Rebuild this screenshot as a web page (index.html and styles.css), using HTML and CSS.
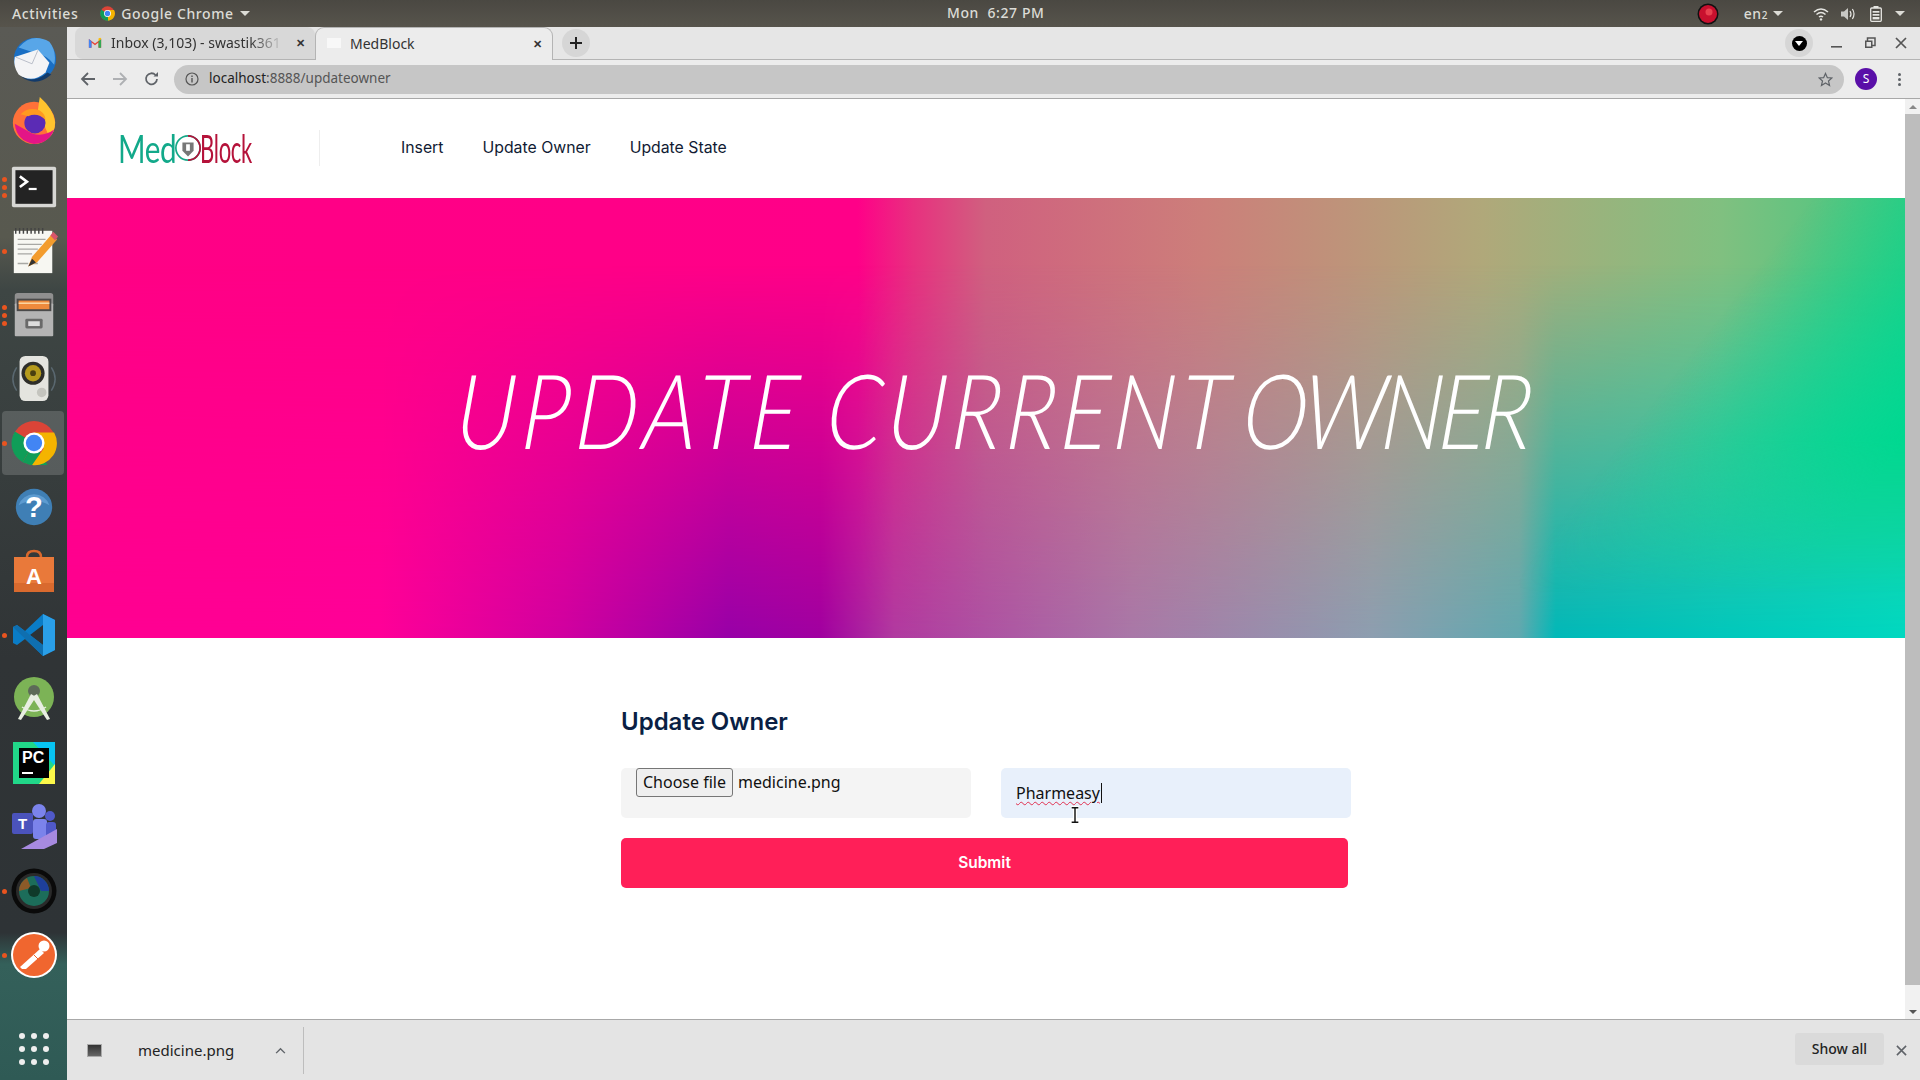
FILE: index.html
```html
<!DOCTYPE html>
<html lang="en">
<head>
    <meta charset="UTF-8">
    <title>MedBlock</title>
    <link rel="stylesheet" href="styles.css">
</head>
<body>

    <!-- ubuntu top bar -->
    <div class="topbar">
        <div class="topbar-left">
            <span class="activities">Activities</span>
            <svg class="chrome-mini" viewBox="0 0 48 48" width="15" height="15">
                <circle cx="24" cy="24" r="23" fill="#db4437"/>
                <path d="M24 24 L44 36 A23 23 0 0 1 12 44 Z" fill="#0f9d58"/>
                <path d="M24 24 L12 44 A23 23 0 0 1 4 12 Z" fill="#0f9d58"/>
                <path d="M24 13 H45 A23 23 0 0 1 26 47 Z" fill="#f4b400"/>
                <circle cx="24" cy="24" r="11" fill="#fff"/>
                <circle cx="24" cy="24" r="8.5" fill="#4285f4"/>
            </svg>
            <span class="app-name">Google Chrome</span>
            <span class="caret"></span>
        </div>
        <div class="clock">Mon&nbsp; 6:27 PM</div>
        <div class="topbar-right">
            <svg class="tray-record" viewBox="0 0 22 22" width="22" height="22">
                <circle cx="11" cy="11" r="10.5" fill="#111"/>
                <circle cx="11" cy="11" r="9" fill="#c8102e"/>
                <circle cx="12" cy="9" r="3.5" fill="#e8404f"/>
            </svg>
            <span class="lang">en<small>2</small></span>
            <span class="caret"></span>
            <svg class="tray-wifi" viewBox="0 0 16 14" width="16" height="14" fill="none" stroke="#e6e6e2" stroke-width="1.5">
                <path d="M1 5 Q8 -1 15 5"/>
                <path d="M3.5 7.5 Q8 3.5 12.5 7.5"/>
                <path d="M6 10 Q8 8.4 10 10"/>
                <circle cx="8" cy="12.4" r="1.2" fill="#e6e6e2" stroke="none"/>
            </svg>
            <svg class="tray-vol" viewBox="0 0 16 14" width="16" height="14" fill="none" stroke="#e6e6e2" stroke-width="1.2">
                <path d="M1 4.5 H4 L8 1 V13 L4 9.5 H1 Z" fill="#c8c8c4" stroke="none"/>
                <path d="M10 4 Q12 7 10 10"/>
                <path d="M12.4 2 Q15.6 7 12.4 12"/>
            </svg>
            <svg class="tray-batt" viewBox="0 0 12 16" width="12" height="16">
                <rect x="0.7" y="2" width="10.6" height="13.3" rx="1" fill="none" stroke="#e6e6e2" stroke-width="1.3"/>
                <rect x="3.5" y="0" width="5" height="2" fill="#e6e6e2"/>
                <rect x="2.6" y="5" width="6.8" height="1.7" fill="#e6e6e2"/>
                <rect x="2.6" y="8" width="6.8" height="1.7" fill="#e6e6e2"/>
                <rect x="2.6" y="11" width="6.8" height="2.4" fill="#e6e6e2"/>
            </svg>
            <span class="caret"></span>
        </div>
    </div>

    <div class="desktop">

        <!-- dock -->
        <div class="dock">
            <div class="dock-item">
                <svg viewBox="0 0 52 52" width="50" height="50">
                    <circle cx="27" cy="26" r="22" fill="#1a6fc4"/>
                    <path d="M10 14 Q24 -2 42 8 Q50 18 47 32 Q40 22 28 20 Z" fill="#58a6e8"/>
                    <path d="M6 24 L30 16 L42 30 L38 40 Q24 52 10 42 Q4 34 6 24 Z" fill="#f4f4f6"/>
                    <path d="M7 24 L24 31 L30 17" fill="none" stroke="#b8bcc8" stroke-width="1"/>
                    <path d="M12 44 Q26 52 40 40 L44 42 Q28 56 12 44 Z" fill="#123a6a"/>
                </svg>
            </div>
            <div class="dock-item">
                <svg class="firefox" viewBox="0 0 52 52" width="50" height="50">
                    <circle cx="26" cy="29" r="22" fill="#ff7139"/>
                    <path d="M32 2 Q46 14 48 28 Q48 38 42 44 L30 16 Z" fill="#ffc42e"/>
                    <path d="M6 30 Q8 48 26 51 Q42 50 47 36 Q36 44 24 40 Z" fill="#e31587"/>
                    <circle cx="27" cy="29" r="11" fill="#5b2bb5"/>
                    <path d="M12 20 Q20 12 32 16 Q38 20 38 26 Q30 18 20 22 Z" fill="#ff9a1f"/>
                </svg>
            </div>
            <div class="dock-item">
                <svg viewBox="0 0 52 52" width="46" height="46">
                    <rect x="1" y="3" width="50" height="46" rx="2" fill="#d7d7d4"/>
                    <rect x="5" y="7" width="42" height="38" fill="#232323"/>
                    <path d="M10 14 L18 20 L10 26" fill="none" stroke="#fff" stroke-width="3"/>
                    <rect x="20" y="27" width="9" height="2.5" fill="#fff"/>
                </svg>
                <span class="run-dots"><i></i><i></i><i></i></span>
            </div>
            <div class="dock-item">
                <svg viewBox="0 0 52 52" width="50" height="50">
                    <rect x="5" y="5" width="40" height="44" fill="#f7f7f2"/>
                    <path d="M7 2 V8 M11 2 V8 M15 2 V8 M19 2 V8 M23 2 V8 M27 2 V8 M31 2 V8 M35 2 V8" stroke="#444" stroke-width="1.5"/>
                    <path d="M9 14 H38 M9 19 H34 M9 24 H30 M9 29 H24 M9 39 H20 M24 39 H30" stroke="#a8a8a4" stroke-width="1.3"/>
                    <path d="M20 42 L24 32 L44 9 L50 14 L29 38 Z" fill="#f39c2d"/>
                    <path d="M43 10 L46 6 L51 11 L48 15 Z" fill="#d8556a"/>
                    <path d="M20 42 L24 34 L28 38 Z" fill="#333"/>
                </svg>
                <span class="run-dots"><i></i></span>
            </div>
            <div class="dock-item">
                <svg viewBox="0 0 52 52" width="50" height="50">
                    <path d="M6 6 Q6 3 9 3 H43 Q46 3 46 6 V16 H6 Z" fill="#8f8f8f"/>
                    <rect x="6" y="14" width="40" height="34" rx="1" fill="#b4b4b4"/>
                    <rect x="8" y="9" width="36" height="13" fill="#4a4a4a"/>
                    <rect x="10" y="11" width="32" height="9" fill="#ee8a3c"/>
                    <rect x="10" y="13" width="32" height="1.5" fill="#fbd9a8"/>
                    <rect x="17" y="30" width="18" height="10" rx="1.5" fill="#6a6a6a"/>
                    <rect x="20" y="32.5" width="12" height="5" fill="#ddd"/>
                </svg>
                <span class="run-dots"><i></i><i></i><i></i></span>
            </div>
            <div class="dock-item">
                <svg viewBox="0 0 52 52" width="50" height="50">
                    <path d="M8 14 Q0 26 8 38 M44 14 Q52 26 44 38" fill="none" stroke="#5a6870" stroke-width="1.5"/>
                    <rect x="11" y="2" width="30" height="47" rx="6" fill="#e4e4df"/>
                    <circle cx="25" cy="20" r="12" fill="#2e2e2a"/>
                    <circle cx="25" cy="20" r="8.5" fill="#b59a1c"/>
                    <circle cx="25" cy="20" r="3" fill="#4a3f10"/>
                    <circle cx="34" cy="40" r="5" fill="#c4c4be"/>
                </svg>
            </div>
            <div class="dock-item active">
                <svg viewBox="0 0 48 48" width="46" height="46">
                    <circle cx="24" cy="24" r="23" fill="#db4437"/>
                    <path d="M24 24 L12 44 A23 23 0 0 1 4 12 Z" fill="#0f9d58"/>
                    <path d="M24 24 L38 47 H20 L12 44 Z" fill="#0f9d58"/>
                    <path d="M24 13 H45 A23 23 0 0 1 22 47 L34 30 Z" fill="#f4b400"/>
                    <circle cx="24" cy="24" r="11" fill="#fff"/>
                    <circle cx="24" cy="24" r="8.5" fill="#4285f4"/>
                </svg>
                <span class="run-dots"><i></i></span>
            </div>
            <div class="dock-item">
                <svg viewBox="0 0 44 44" width="40" height="40">
                    <circle cx="22" cy="22" r="20" fill="#3f7fb5"/>
                    <path d="M5 20 A18 18 0 0 1 39 20 Q22 10 5 20 Z" fill="#5d9bd0"/>
                    <text x="22" y="33" text-anchor="middle" class="help-mark">?</text>
                </svg>
            </div>
            <div class="dock-item">
                <svg viewBox="0 0 44 44" width="44" height="44">
                    <path d="M15 8 Q15 2 22 2 Q29 2 29 8 V12" fill="none" stroke="#d9682c" stroke-width="2.5"/>
                    <rect x="2" y="8" width="40" height="35" fill="#e9793a"/>
                    <rect x="2" y="34" width="40" height="9" fill="#d96a2e"/>
                    <text x="22" y="35" text-anchor="middle" class="store-mark">A</text>
                </svg>
            </div>
            <div class="dock-item">
                <svg viewBox="0 0 44 44" width="44" height="44">
                    <path d="M31 1 L43 7 V37 L31 43 L13 26 L5 32 L1 30 V14 L5 12 L13 18 Z" fill="#0a7cc6"/>
                    <path d="M31 1 L43 7 V37 L31 43 Z" fill="#2a9fe8"/>
                    <path d="M31 12 V32 L18 22 Z" fill="#2d3236"/>
                    <path d="M1 14 L5 12 L31 32 V43 Z" fill="#0f6fb0"/>
                </svg>
                <span class="run-dots"><i></i></span>
            </div>
            <div class="dock-item">
                <svg viewBox="0 0 44 44" width="44" height="44">
                    <circle cx="22" cy="20" r="20" fill="#7cb356"/>
                    <circle cx="22" cy="14" r="6" fill="#5d6a58"/>
                    <path d="M19 17 L6 42 L9 43 L24 20 Z" fill="#e8eee2"/>
                    <path d="M25 17 L38 42 L35 43 L20 20 Z" fill="#e8eee2"/>
                    <path d="M10 30 Q22 38 34 30" fill="none" stroke="#e8eee2" stroke-width="1.5"/>
                </svg>
            </div>
            <div class="dock-item">
                <svg viewBox="0 0 42 42" width="42" height="42">
                    <rect width="42" height="42" fill="#21d789"/>
                    <path d="M20 0 H42 V24 Z" fill="#07c3f2"/>
                    <path d="M0 42 V20 L14 42 Z" fill="#21d789"/>
                    <path d="M26 42 L42 22 V42 Z" fill="#fcf84a"/>
                    <rect x="6" y="6" width="30" height="30" fill="#000"/>
                    <text x="9" y="21" class="pc-mark">PC</text>
                    <rect x="9" y="30" width="11" height="2" fill="#fff"/>
                </svg>
            </div>
            <div class="dock-item">
                <svg viewBox="0 0 48 48" width="48" height="48">
                    <circle cx="29" cy="8" r="7" fill="#7b83eb"/>
                    <circle cx="40" cy="13" r="5" fill="#5059c9"/>
                    <rect x="23" y="16" width="14" height="20" rx="3" fill="#7b83eb"/>
                    <rect x="36" y="19" width="10" height="16" rx="3" fill="#5059c9"/>
                    <rect x="2" y="10" width="21" height="21" rx="2" fill="#4b53bc"/>
                    <text x="12.5" y="26" text-anchor="middle" class="teams-mark">T</text>
                    <path d="M11 46 L47 26 V40 L34 46 Z" fill="#a78ae0"/>
                </svg>
            </div>
            <div class="dock-item">
                <svg viewBox="0 0 46 46" width="46" height="46">
                    <circle cx="23" cy="23" r="22.5" fill="#0a0a0a"/>
                    <circle cx="23" cy="23" r="18" fill="#2a2a2a"/>
                    <circle cx="23" cy="23" r="15" fill="#1c6d5a"/>
                    <path d="M23 8 A15 15 0 0 1 38 23 L30 23 Z" fill="#1e3f9a"/>
                    <path d="M8 23 A15 15 0 0 1 16 10 L20 20 Z" fill="#8c5a28"/>
                    <circle cx="23" cy="23" r="6" fill="#0f3a2a"/>
                </svg>
                <span class="run-dots"><i></i></span>
            </div>
            <div class="dock-item">
                <svg viewBox="0 0 48 48" width="48" height="48">
                    <circle cx="24" cy="24" r="23" fill="#fff"/>
                    <circle cx="24" cy="24" r="21" fill="#f0662f"/>
                    <path d="M10 36 L30 18 L34 22 L16 38 L12 38 Z" fill="#fff"/>
                    <circle cx="34" cy="15" r="5.5" fill="#fff"/>
                    <path d="M24 24 L28 28 L24 32" fill="none" stroke="#f0662f" stroke-width="1"/>
                </svg>
                <span class="run-dots"><i></i></span>
            </div>
            <div class="app-grid">
                <i></i><i></i><i></i><i></i><i></i><i></i><i></i><i></i><i></i>
            </div>
        </div>

        <!-- browser window -->
        <div class="browser">
            <div class="tabstrip">
                <div class="tab">
                    <svg viewBox="0 0 16 12" width="14" height="11">
                        <path d="M1 12 V2 L8 7 L15 2 V12 H12 V6 L8 9 L4 6 V12 Z" fill="#ea4335"/>
                        <path d="M1 12 V2 L4 4.5 V12 Z" fill="#4285f4"/>
                        <path d="M15 12 V2 L12 4.5 V12 Z" fill="#34a853"/>
                        <path d="M12 4.5 L15 2 V1 Q14 0 12.5 1 L12 1.5 Z" fill="#fbbc04"/>
                    </svg>
                    <span class="tab-title">Inbox (3,103) - swastik361</span>
                    <span class="tab-close">&#10005;</span>
                </div>
                <div class="tab tab-active">
                    <span class="tab-fav"></span>
                    <span class="tab-title">MedBlock</span>
                    <span class="tab-close">&#10005;</span>
                </div>
                <div class="new-tab">
                    <svg viewBox="0 0 14 14" width="14" height="14">
                        <path d="M7 1 V13 M1 7 H13" stroke="#222" stroke-width="2"/>
                    </svg>
                </div>
                <div class="window-btns">
                    <div class="media-btn"><span><i></i></span></div>
                    <svg class="win-min" viewBox="0 0 12 12" width="12" height="12"><rect y="9" width="11" height="1.6" fill="#555"/></svg>
                    <svg class="win-max" viewBox="0 0 12 12" width="12" height="12">
                        <rect x="3.5" y="1" width="7.5" height="7.5" fill="none" stroke="#555" stroke-width="1.5"/>
                        <rect x="1" y="3.5" width="7.5" height="7.5" fill="#555"/>
                        <rect x="2.5" y="5" width="4.5" height="4.5" fill="#e6e6e6"/>
                    </svg>
                    <svg class="win-close" viewBox="0 0 12 12" width="12" height="12"><path d="M1 1 L11 11 M11 1 L1 11" stroke="#555" stroke-width="1.7"/></svg>
                </div>
            </div>

            <div class="toolbar">
                <svg class="tool-icon" viewBox="0 0 16 16" width="16" height="16"><path d="M15 8 H2 M8 2 L2 8 L8 14" fill="none" stroke="#5f6368" stroke-width="1.8"/></svg>
                <svg class="tool-icon" viewBox="0 0 16 16" width="16" height="16"><path d="M1 8 H14 M8 2 L14 8 L8 14" fill="none" stroke="#aeb0b3" stroke-width="1.8"/></svg>
                <svg class="tool-icon" viewBox="0 0 16 16" width="16" height="16"><path d="M13 8 A5.5 5.5 0 1 1 11.5 4" fill="none" stroke="#5f6368" stroke-width="1.8"/><path d="M9.5 5.5 H14 V1 Z" fill="#5f6368"/></svg>
                <div class="omnibox">
                    <svg viewBox="0 0 14 14" width="14" height="14"><circle cx="7" cy="7" r="6" fill="none" stroke="#555" stroke-width="1.2"/><rect x="6.3" y="6" width="1.4" height="4.5" fill="#555"/><rect x="6.3" y="3.5" width="1.4" height="1.5" fill="#555"/></svg>
                    <span class="url"><b>localhost</b>:8888/updateowner</span>
                    <svg class="star" viewBox="0 0 16 16" width="15" height="15"><path d="M8 1.5 L10 6 L14.8 6.4 L11.2 9.6 L12.3 14.4 L8 11.8 L3.7 14.4 L4.8 9.6 L1.2 6.4 L6 6 Z" fill="none" stroke="#5f6368" stroke-width="1.3"/></svg>
                </div>
                <div class="avatar">S</div>
                <div class="kebab"><i></i><i></i><i></i></div>
            </div>

            <div class="viewport">
                <div class="page">
                    <div class="site-header">
                        <div class="logo">
                            <span class="logo-med">Med</span>
                            <svg viewBox="0 0 30 30" width="28" height="28">
                                <circle cx="15" cy="15" r="13" fill="none" stroke="#16a888" stroke-width="1.8"/>
                                <path d="M15 2 A13 13 0 0 1 15 28" fill="none" stroke="#b5123a" stroke-width="1.8"/>
                                <path d="M9 9 H21 V18 L15 24 L9 18 Z" fill="#777"/>
                                <rect x="13" y="11" width="4" height="7" fill="#fff"/>
                            </svg>
                            <span class="logo-block">Block</span>
                        </div>
                        <ul class="nav">
                            <li>Insert</li>
                            <li>Update Owner</li>
                            <li>Update State</li>
                        </ul>
                    </div>

                    <div class="hero">
                        <h1><span class="word-update">UPDATE</span> <span class="word-current">CURRENT</span> <span class="word-owner">OWNER</span></h1>
                    </div>

                    <div class="form-wrap">
                        <h2>Update Owner</h2>
                        <div class="form-row">
                            <div class="file-field">
                                <span class="file-btn">Choose file</span>
                                <span class="file-name">medicine.png</span>
                            </div>
                            <div class="text-field">
                                <span class="typed">Pharmeasy</span>
                            </div>
                        </div>
                        <button class="submit" type="button">Submit</button>
                    </div>

                    <svg class="ibeam" viewBox="0 0 9 16" width="10" height="18">
                        <path d="M1 1 H8 M1 15 H8 M4.5 1 V15" fill="none" stroke="#fff" stroke-width="3.5"/>
                        <path d="M1.5 1.5 H7.5 M1.5 14.5 H7.5 M4.5 1.5 V14.5" fill="none" stroke="#111" stroke-width="1.3"/>
                    </svg>
                </div>
                <div class="scrollbar">
                    <span class="arrow-up"></span>
                    <div class="thumb"></div>
                    <span class="arrow-down"></span>
                </div>
            </div>

            <div class="shelf">
                <div class="shelf-item">
                    <span class="shelf-file"></span>
                    <span class="shelf-name">medicine.png</span>
                    <svg viewBox="0 0 12 8" width="11" height="7"><path d="M1 7 L6 2 L11 7" fill="none" stroke="#5f6368" stroke-width="1.6"/></svg>
                </div>
                <div class="shelf-right">
                    <span class="show-all">Show all</span>
                    <svg viewBox="0 0 12 12" width="11" height="11"><path d="M1 1 L11 11 M11 1 L1 11" stroke="#5f6368" stroke-width="1.7"/></svg>
                </div>
            </div>
        </div>
    </div>

</body>
</html>
```

FILE: styles.css
```css
* {
    box-sizing: border-box;
}
html, body {
    margin: 0;
    padding: 0;
    width: 1920px;
    height: 1080px;
    overflow: hidden;
}
body {
    display: flex;
    flex-direction: column;
    font-family: "Noto Sans", sans-serif;
    background-color: #333;
}

/* top bar */
.topbar {
    height: 27px;
    flex: none;
    position: relative;
    display: flex;
    justify-content: space-between;
    align-items: center;
    padding: 0 12px;
    background: linear-gradient(#4a4842, #57544c);
    color: #dcdcd6;
    font-size: 14px;
    font-weight: 500;
    letter-spacing: 0.6px;
}
.topbar-left, .topbar-right {
    display: flex;
    align-items: center;
}
.activities {
    margin-right: 22px;
}
.chrome-mini {
    margin-right: 6px;
}
.app-name {
    margin-right: 6px;
}
.caret {
    width: 0;
    height: 0;
    border-left: 5px solid transparent;
    border-right: 5px solid transparent;
    border-top: 5px solid #dcdcd6;
}
.clock {
    position: absolute;
    left: 947px;
    top: 3px;
}
.tray-record {
    margin-right: 25px;
}
.lang {
    margin-right: 5px;
}
.lang small {
    font-size: 10px;
}
.topbar-right .caret {
    margin-right: 30px;
}
.tray-wifi {
    margin-right: 11px;
}
.tray-vol {
    margin-right: 14px;
}
.tray-batt {
    margin-right: 13px;
}
.topbar-right .caret:last-child {
    margin-right: 3px;
}

.desktop {
    flex: 1;
    display: flex;
    min-height: 0;
}

/* dock */
.dock {
    width: 67px;
    flex: none;
    display: flex;
    flex-direction: column;
    background: linear-gradient(#5a5a55 0, #58594f 20%, #3e4644 25%, #303436 60%, #2e3336 86%, #34605a 89%, #2f5a55 100%);
}
.dock-item {
    height: 64px;
    flex: none;
    position: relative;
    display: flex;
    align-items: center;
    justify-content: center;
}
.dock-item.active::before {
    content: "";
    position: absolute;
    left: 2px;
    right: 3px;
    top: 0;
    bottom: 0;
    border-radius: 4px;
    background-color: rgba(255, 255, 255, 0.16);
}
.dock-item svg {
    position: relative;
}
.dock-item .firefox {
    top: -3px;
}
.run-dots {
    position: absolute;
    left: 2px;
    top: 0;
    bottom: 0;
    display: flex;
    flex-direction: column;
    justify-content: center;
    gap: 3px;
}
.run-dots i {
    width: 5px;
    height: 5px;
    border-radius: 50%;
    background-color: #e9541f;
}
.help-mark {
    font-family: "Liberation Sans", sans-serif;
    font-size: 32px;
    font-weight: 700;
    fill: #fff;
}
.store-mark {
    font-family: "Liberation Sans", sans-serif;
    font-size: 22px;
    font-weight: 700;
    fill: #fff;
}
.pc-mark {
    font-family: "Liberation Sans", sans-serif;
    font-size: 16px;
    font-weight: 700;
    fill: #fff;
}
.teams-mark {
    font-family: "Liberation Sans", sans-serif;
    font-size: 15px;
    font-weight: 700;
    fill: #fff;
}
.app-grid {
    margin-top: auto;
    margin-bottom: 15px;
    margin-left: 19px;
    width: 29px;
    display: grid;
    grid-template-columns: repeat(3, 5px);
    gap: 7px;
}
.app-grid i {
    width: 6px;
    height: 6px;
    border-radius: 50%;
    background-color: #eee;
}

/* browser window */
.browser {
    flex: 1;
    min-width: 0;
    display: flex;
    flex-direction: column;
}
.tabstrip {
    height: 33px;
    flex: none;
    display: flex;
    align-items: flex-end;
    padding-left: 8px;
    background-color: #e6e6e6;
    border-bottom: 1px solid #b4b4b4;
    font-size: 14px;
}
.tab {
    width: 240px;
    height: 32px;
    display: flex;
    align-items: center;
    padding: 0 10px 2px 13px;
    background-color: #d8d8d8;
    border-radius: 8px 8px 0 8px;
    color: #333;
}
.tab-title {
    margin-left: 9px;
    width: 173px;
    overflow: hidden;
    white-space: nowrap;
    -webkit-mask-image: linear-gradient(to right, #000 80%, transparent);
    mask-image: linear-gradient(to right, #000 80%, transparent);
}
.tab-close {
    margin-left: auto;
    font-size: 11px;
    font-weight: 700;
}
.tab-active {
    width: 238px;
    height: 33px;
    margin-bottom: -1px;
    background-color: #ececec;
    border: 1px solid #b4b4b4;
    border-bottom: none;
    border-radius: 9px 9px 0 0;
    padding-left: 11px;
}
.tab-active .tab-title {
    margin-left: 9px;
    width: auto;
    -webkit-mask-image: none;
    mask-image: none;
}
.tab-fav {
    width: 14px;
    height: 10px;
    background-color: #f8f8f8;
}
.new-tab {
    width: 28px;
    height: 28px;
    margin: 0 0 2px 9px;
    border-radius: 50%;
    background-color: #d6d6d6;
    display: flex;
    align-items: center;
    justify-content: center;
}
.window-btns {
    margin-left: auto;
    height: 32px;
    display: flex;
    align-items: center;
    padding-right: 13px;
}
.media-btn {
    width: 28px;
    height: 28px;
    margin-right: 18px;
    border-radius: 50%;
    background-color: #d6d6d6;
    display: flex;
    align-items: center;
    justify-content: center;
}
.media-btn span {
    width: 15px;
    height: 15px;
    border-radius: 50%;
    background-color: #000;
    display: flex;
    align-items: center;
    justify-content: center;
}
.media-btn i {
    width: 0;
    height: 0;
    border-left: 4px solid transparent;
    border-right: 4px solid transparent;
    border-top: 5px solid #fff;
}
.win-min {
    margin-right: 21px;
}
.win-max {
    margin-right: 19px;
}
.toolbar {
    height: 39px;
    flex: none;
    display: flex;
    align-items: center;
    padding-left: 13px;
    background-color: #ececec;
    border-bottom: 1px solid #a8a8a8;
}
.tool-icon {
    margin-right: 16px;
}
.omnibox {
    width: 1670px;
    height: 29px;
    margin-left: -2px;
    display: flex;
    align-items: center;
    padding: 0 11px 0 11px;
    border-radius: 15px;
    background-color: #c6c6c6;
}
.url {
    margin-left: 10px;
    padding-bottom: 2px;
    font-size: 13.5px;
    color: #555;
}
.url b {
    font-weight: 400;
    color: #222;
}
.star {
    margin-left: auto;
}
.avatar {
    width: 22px;
    height: 22px;
    margin-left: 11px;
    border-radius: 50%;
    background-color: #5a0fa8;
    color: #fff;
    font-size: 12px;
    text-align: center;
    line-height: 22px;
}
.kebab {
    margin-left: 21px;
    display: flex;
    flex-direction: column;
    gap: 2px;
}
.kebab i {
    width: 3px;
    height: 3px;
    border-radius: 50%;
    background-color: #5f6368;
}

/* page */
.viewport {
    flex: 1;
    min-height: 0;
    display: flex;
    background-color: #fff;
}
.page {
    flex: 1;
    min-width: 0;
    position: relative;
    font-family: Inter, sans-serif;
}
.site-header {
    height: 99px;
    display: flex;
    align-items: flex-start;
}
.logo {
    width: 253px;
    height: 36px;
    margin-top: 31px;
    display: flex;
    align-items: center;
    padding-left: 51px;
    border-right: 1px solid #eee;
    font-family: Lato, sans-serif;
    font-weight: 400;
    font-size: 38px;
    letter-spacing: -0.5px;
}
.logo svg {
    margin: 0 -2px;
    flex: none;
}
.logo-med, .logo-block {
    display: inline-block;
    transform-origin: left center;
}
.logo-med {
    color: #12a98a;
    transform: scaleX(0.78);
    margin-right: -17px;
}
.logo-block {
    color: #b5123a;
    transform: scaleX(0.58);
    margin-right: -36px;
}
.nav {
    list-style: none;
    margin: 38px 0 0 81px;
    padding: 0;
    display: flex;
    gap: 39px;
    font-size: 15.8px;
    line-height: 22px;
    color: #111b33;
}
.hero {
    height: 440px;
    position: relative;
    display: flex;
    align-items: center;
    justify-content: center;
    background: linear-gradient(90deg, #ff0085 0, #ff0088 43%, #e8307f 46%, #d0607f 50%, #cc7f7a 62%, #b0a87a 77%, #80c080 90%, #40c880 100%);
    overflow: hidden;
}
.hero::before {
    content: "";
    position: absolute;
    inset: 0;
    background: linear-gradient(90deg, #ff0090 0, #ff0098 17%, #d000a0 27%, #9800a8 36%, #a000a0 41%, #b03aa0 45%, #a878a8 58%, #8c9eb0 71%, #60a8b0 79%, #00b8b8 81%, #00d8c0 100%);
    -webkit-mask-image: linear-gradient(to bottom, transparent 15%, #000 100%);
    mask-image: linear-gradient(to bottom, transparent 15%, #000 100%);
}
.hero::after {
    content: "";
    position: absolute;
    inset: 0;
    background: linear-gradient(128deg, transparent 80%, rgba(0, 216, 144, 0.4) 85%, #00d890 93%);
    -webkit-mask-image: linear-gradient(to bottom, #000 55%, transparent 90%);
    mask-image: linear-gradient(to bottom, #000 55%, transparent 90%);
}
.hero h1 {
    position: relative;
    z-index: 1;
    margin: -20px 0 0 14px;
    color: #fff;
    font-family: Lato, sans-serif;
    font-size: 104px;
    font-style: italic;
    font-weight: 300;
    white-space: nowrap;
    transform: scaleX(0.855) skewX(-5deg);
}
.word-update {
    letter-spacing: 6.8px;
}
.word-current {
    letter-spacing: 5.3px;
}
.word-owner {
    margin-left: -14px;
    letter-spacing: -5.7px;
}
.form-wrap {
    width: 730px;
    margin: 0 auto;
    padding-top: 68px;
}
.form-wrap h2 {
    margin: 0 0 30px 0;
    font-size: 24px;
    line-height: 32px;
    font-weight: 600;
    color: #0a1f44;
}
.form-row {
    display: grid;
    grid-template-columns: 350px 350px;
    gap: 30px;
    margin-bottom: 20px;
}
.file-field, .text-field {
    height: 50px;
    border-radius: 5px;
    font-size: 16px;
    font-family: "Noto Sans", sans-serif;
    color: #111;
}
.file-field {
    display: flex;
    align-items: flex-start;
    padding-left: 15px;
    background-color: #f4f4f4;
}
.file-btn {
    width: 97px;
    height: 29px;
    line-height: 27px;
    text-align: center;
    background-color: #efefef;
    border: 1px solid #767676;
    border-radius: 3px;
}
.file-name {
    margin-left: 5px;
    line-height: 29px;
}
.text-field {
    display: flex;
    align-items: center;
    padding-left: 15px;
    background-color: #e8f0fb;
}
.typed {
    padding-right: 1px;
    border-right: 1px solid #111;
    line-height: 20px;
    text-decoration: underline wavy #e03050 1px;
    text-underline-offset: 2px;
}
.submit {
    display: block;
    width: 727px;
    height: 50px;
    padding-bottom: 3px;
    border: none;
    border-radius: 5px;
    background-color: #ff1f58;
    color: #fff;
    font-family: Inter, sans-serif;
    font-size: 15.5px;
    font-weight: 600;
}
.ibeam {
    position: absolute;
    left: 1003px;
    top: 707px;
}

/* scrollbar */
.scrollbar {
    width: 15px;
    flex: none;
    display: flex;
    flex-direction: column;
    align-items: center;
    background-color: #f1f1f1;
}
.arrow-up {
    width: 0;
    height: 0;
    margin: 6px 0 5px;
    border-left: 4px solid transparent;
    border-right: 4px solid transparent;
    border-bottom: 4px solid #888;
}
.thumb {
    width: 100%;
    height: 871px;
    background-color: #bdbdbd;
}
.arrow-down {
    width: 0;
    height: 0;
    margin-top: auto;
    margin-bottom: 5px;
    border-left: 4px solid transparent;
    border-right: 4px solid transparent;
    border-top: 4px solid #555;
}

/* download shelf */
.shelf {
    height: 61px;
    flex: none;
    display: flex;
    align-items: center;
    justify-content: space-between;
    background-color: #e4e4e4;
    border-top: 1px solid #a8a8a8;
    font-size: 15px;
    color: #222;
}
.shelf-item {
    width: 237px;
    height: 47px;
    display: flex;
    align-items: center;
    padding-left: 20px;
    border-right: 1px solid #bdbdbd;
}
.shelf-file {
    width: 15px;
    height: 13px;
    border: 1px solid #aaa;
    background: linear-gradient(#333, #666);
    margin-right: 36px;
}
.shelf-name {
    margin-right: 41px;
}
.shelf-right {
    display: flex;
    align-items: center;
    padding-right: 13px;
}
.show-all {
    width: 89px;
    height: 32px;
    margin: 0 12px 2px 0;
    line-height: 32px;
    text-align: center;
    font-size: 14px;
    font-weight: 500;
    border-radius: 3px;
    background-color: #dadada;
}
```
